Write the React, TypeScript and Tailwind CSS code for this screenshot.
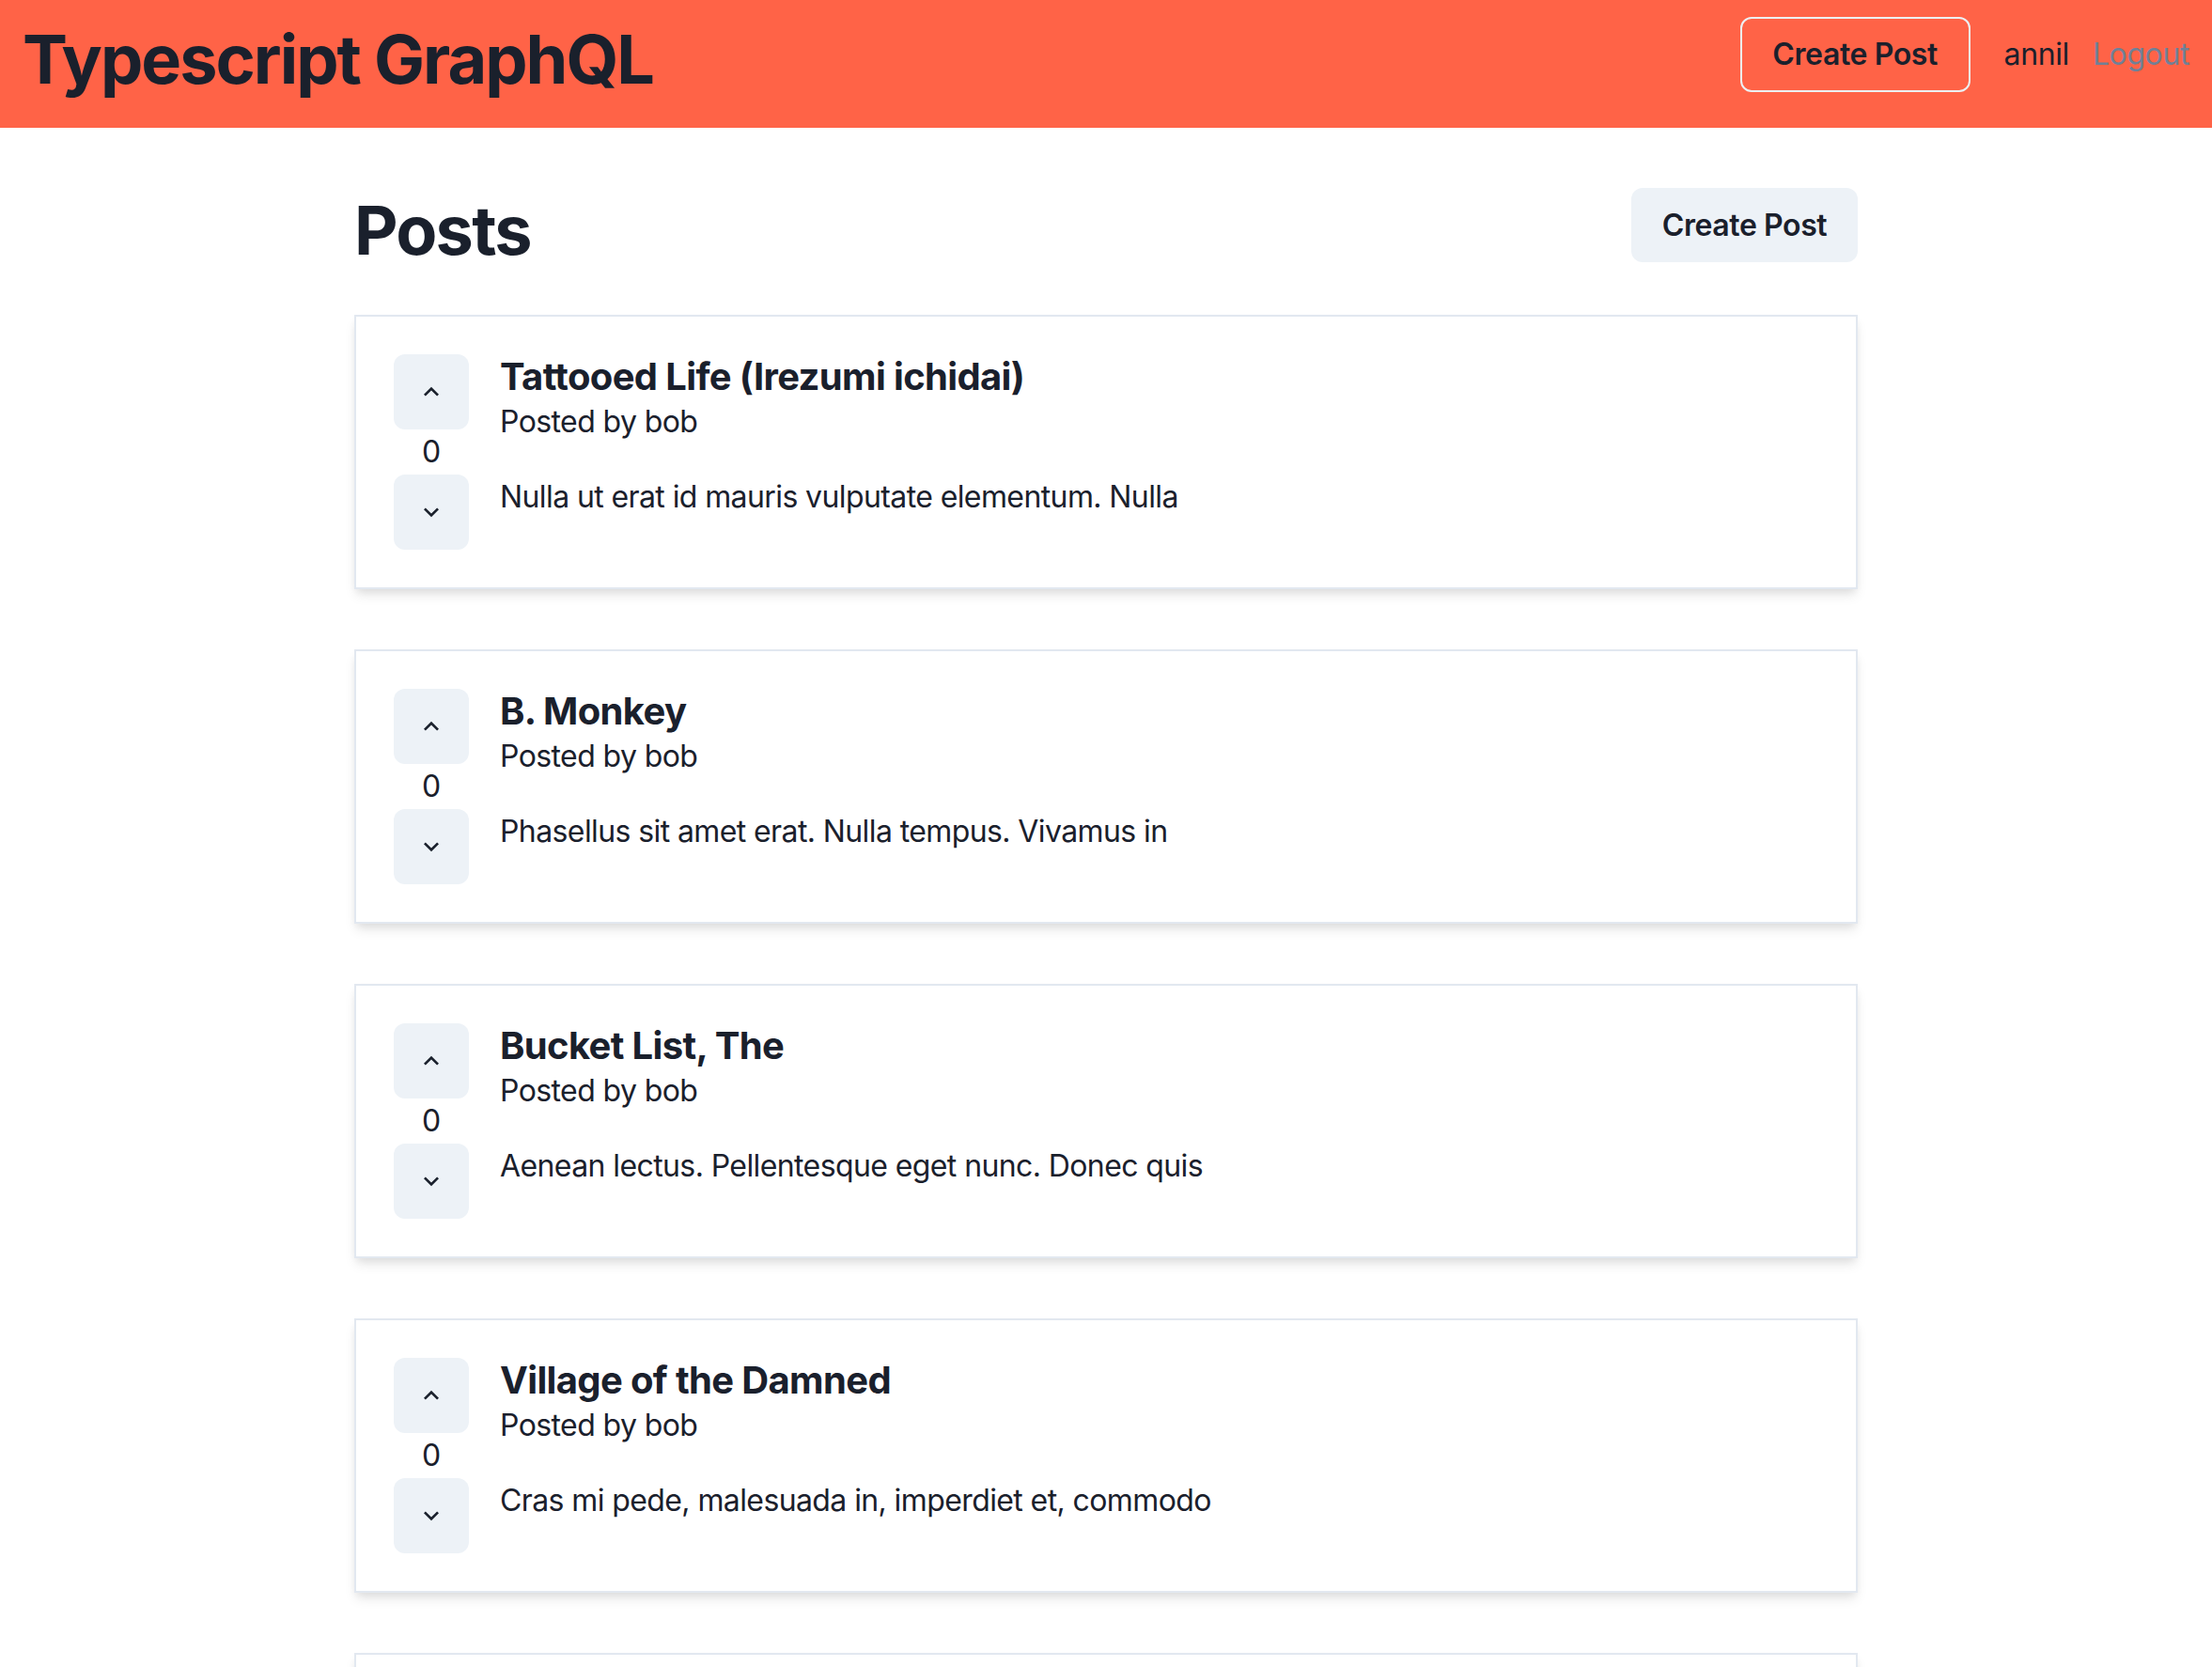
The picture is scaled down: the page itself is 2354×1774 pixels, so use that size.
import React from 'react';

const POSTS = [
  { id: 1, title: 'Tattooed Life (Irezumi ichidai)', snippet: 'Nulla ut erat id mauris vulputate elementum. Nulla', points: 0 },
  { id: 2, title: 'B. Monkey', snippet: 'Phasellus sit amet erat. Nulla tempus. Vivamus in', points: 0 },
  { id: 3, title: 'Bucket List, The', snippet: 'Aenean lectus. Pellentesque eget nunc. Donec quis', points: 0 },
  { id: 4, title: 'Village of the Damned', snippet: 'Cras mi pede, malesuada in, imperdiet et, commodo', points: 0 },
  { id: 5, title: 'Sound of Music, The', snippet: 'Morbi non lectus. Aliquam sit amet diam in magna', points: 0 },
];

const ChevronUp = () => (
  <svg viewBox="0 0 24 24" className="w-[32px] h-[32px]" fill="#1a202c">
    <path d="M12 8l-6 6 1.41 1.41L12 10.83l4.59 4.58L18 14z" />
  </svg>
);

const ChevronDown = () => (
  <svg viewBox="0 0 24 24" className="w-[32px] h-[32px]" fill="#1a202c">
    <path d="M16.59 8.59L12 13.17 7.41 8.59 6 10l6 6 6-6z" />
  </svg>
);

const PostCard: React.FC<{ post: (typeof POSTS)[number] }> = ({ post }) => (
  <div className="border-2 border-[#e2e8f0] bg-white p-[40px] shadow-[0_8px_12px_-2px_rgba(0,0,0,0.1),0_4px_8px_-2px_rgba(0,0,0,0.06)]">
    <div className="flex">
      <div className="flex flex-col items-center w-[80px] shrink-0">
        <button className="w-[80px] h-[80px] rounded-[12px] bg-[#edf2f7] flex items-center justify-center">
          <ChevronUp />
        </button>
        <span className="text-[32px] leading-[48px]">{post.points}</span>
        <button className="w-[80px] h-[80px] rounded-[12px] bg-[#edf2f7] flex items-center justify-center">
          <ChevronDown />
        </button>
      </div>
      <div className="ml-[33px]">
        <h2 className="text-[40px] leading-[48px] font-bold tracking-[-0.65px]">{post.title}</h2>
        <p className="text-[32px] leading-[48px] tracking-[-0.6px]">Posted by bob</p>
        <p className="mt-[32px] text-[32px] leading-[48px] tracking-[-0.6px]">{post.snippet}</p>
      </div>
    </div>
  </div>
);

export default function App() {
  return (
    <div className="min-h-screen bg-white text-[#1a202c] font-[family-name:Inter,sans-serif]">
      {/* Navbar */}
      <nav className="h-[136px] bg-[#ff6347] flex items-start justify-between px-[24px] pt-[18px]">
        <h1 className="mt-[2px] text-[72px] leading-[86px] font-bold tracking-[-2px]">Typescript GraphQL</h1>
        <div className="flex items-center">
          <button className="w-[245px] h-[80px] rounded-[12px] border-2 border-[#edf0f4] text-[32px] font-semibold tracking-[-0.4px]">
            Create Post
          </button>
          <span className="ml-[36px] text-[32px] tracking-[-0.4px]">annil</span>
          <button className="ml-[25px] text-[32px] text-[#718096] tracking-[-0.4px]">Logout</button>
        </div>
      </nav>

      <main className="w-[1600px] mx-auto pt-[64px]">
        <div className="flex items-start justify-between mb-[47px]">
          <h1 className="mt-[2px] text-[72px] leading-[86px] font-bold tracking-[-1.8px]">Posts</h1>
          <button className="w-[241px] h-[79px] rounded-[12px] bg-[#edf2f7] text-[32px] font-semibold tracking-[-0.4px]">
            Create Post
          </button>
        </div>

        <div className="flex flex-col gap-[64px] pb-[64px]">
          {POSTS.map((post) => (
            <PostCard key={post.id} post={post} />
          ))}
        </div>
      </main>
    </div>
  );
}
